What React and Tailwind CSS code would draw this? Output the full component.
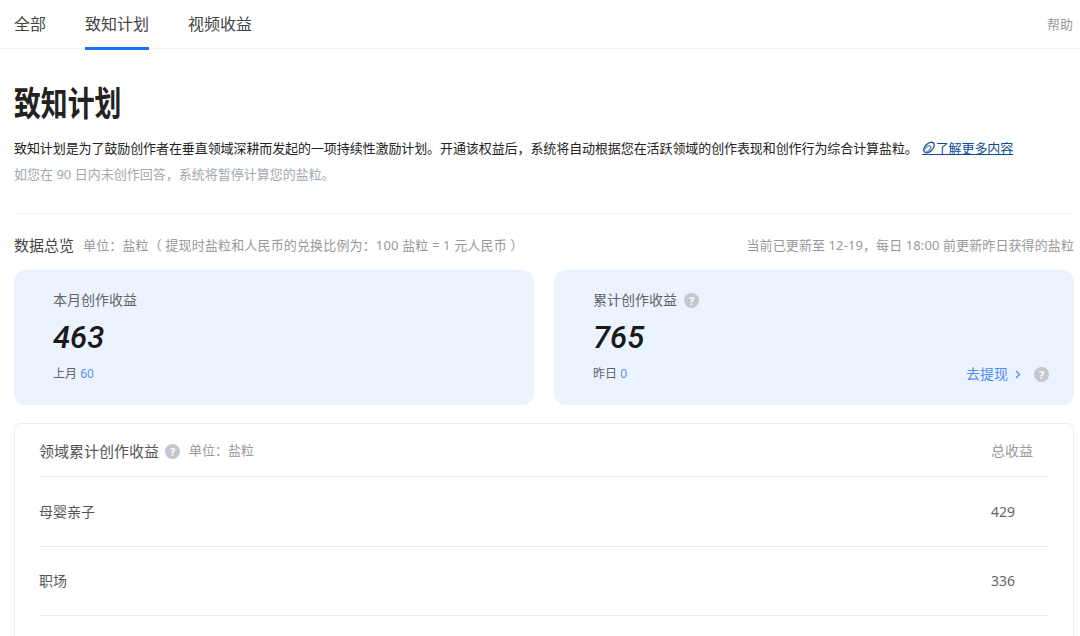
const base = "font-['Noto_Sans','Noto_Sans_CJK_SC',sans-serif]";

const HelpDot = () => (
    <span className="inline-flex h-[15px] w-[15px] items-center justify-center rounded-full bg-[#c4c7ce] text-[11px] font-bold leading-none text-white">?</span>
)

const Row = ({name, value, height = 'h-[70px]'}) => (
    <div className={`${height} flex items-center justify-between border-b border-[#ebebeb] text-sm`}>
        <span className="text-[#555555]">{name}</span>
        <span className="mr-[34px] w-[24px] text-[#666666]">{value}</span>
    </div>
)

const App = () => {
    return (
        <div className={`${base} h-[636px] w-[1080px] overflow-hidden bg-white`}>
            {/* 상단 탭 */}
            <div className="flex h-[49px] items-start justify-between border-b border-[#f0f0f2] pl-[14px] pr-[7px]">
                <div className="flex text-base text-[#444444]">
                    <div className="h-[49px] pt-[12px] leading-6">全部</div>
                    <div className="ml-[39px] h-[50px] w-[64px] border-b-[3px] border-[#1772f6] pt-[12px] leading-6">致知计划</div>
                    <div className="ml-[39px] h-[49px] pt-[12px] leading-6">视频收益</div>
                </div>
                <div className="pt-[15px] text-[13px] leading-[18px] text-[#999999]">帮助</div>
            </div>

            <div className="px-[14px] pr-[6px]">
                <h1 className="mt-[32px] origin-left scale-x-[0.79] text-[34px] font-bold leading-[44px] text-[#222222]">致知计划</h1>
                <p className="mt-[13px] flex items-center whitespace-nowrap text-[13px] leading-[20px] tracking-[-0.09px] text-[#222222]">
                    <span>致知计划是为了鼓励创作者在垂直领域深耕而发起的一项持续性激励计划。开通该权益后，系统将自动根据您在活跃领域的创作表现和创作行为综合计算盐粒。</span>
                    <a className="ml-[2px] inline-flex items-center text-[#0f4c97] underline">
                        <svg width="16" height="15" viewBox="0 0 16 15" fill="none" strokeWidth="1.3">
                            <ellipse cx="9" cy="6.5" rx="6.4" ry="3.8" stroke="#175199" transform="rotate(-45 9 6.5)" />
                            <ellipse cx="7.5" cy="8" rx="4" ry="2" stroke="#6d7fc4" transform="rotate(-45 7.5 8)" />
                            <path d="M2 13.5h14" stroke="#175199" strokeWidth="1" />
                        </svg>
                        了解更多内容
                    </a>
                </p>
                <p className="mt-[6px] text-[13px] leading-5 text-[#a3a8b0]">如您在 90 日内未创作回答，系统将暂停计算您的盐粒。</p>

                <div className="mt-[29px] border-t border-[#f0f0f2]"></div>

                <div className="mt-[21px] flex items-center justify-between">
                    <div className="flex items-center">
                        <span className="text-[15px] leading-5 text-[#444444]">数据总览</span>
                        <span className="ml-[9px] text-[13px] leading-5 tracking-[0.15px] text-[#999999]">单位：盐粒（ 提现时盐粒和人民币的兑换比例为：100 盐粒 = 1 元人民币 ）</span>
                    </div>
                    <span className="text-[13px] leading-5 tracking-[0.1px] text-[#999999]">当前已更新至 12-19，每日 18:00 前更新昨日获得的盐粒</span>
                </div>

                <div className="mt-[15px] flex gap-[20px]">
                    <div className="h-[135px] w-[520px] rounded-xl bg-[#ebf3ff] pl-[39px] pt-[20px]">
                        <div className="text-sm leading-5 text-[#646464]">本月创作收益</div>
                        <div className="mt-[8px] font-['Roboto'] text-[31px] font-medium italic leading-[40px] text-[#1a1a1a]">463</div>
                        <div className="mt-[6px] text-xs leading-5 text-[#646464]">上月 <span className="text-[#5b8ff0]">60</span></div>
                    </div>
                    <div className="h-[135px] w-[520px] rounded-xl bg-[#ebf3ff] pl-[39px] pt-[20px]">
                        <div className="flex items-center gap-[7px] text-sm leading-5 text-[#646464]">累计创作收益 <HelpDot /></div>
                        <div className="mt-[8px] font-['Roboto'] text-[31px] font-medium italic leading-[40px] text-[#1a1a1a]">765</div>
                        <div className="mt-[6px] flex items-center justify-between pr-[25px] text-xs leading-5 text-[#646464]">
                            <span>昨日 <span className="text-[#5b8ff0]">0</span></span>
                            <span className="flex items-center gap-[13px]">
                                <span className="flex items-center gap-[7px] text-sm text-[#4c8cf5]">去提现
                                    <svg width="6" height="9" viewBox="0 0 6 9" fill="none" stroke="#4c8cf5" strokeWidth="1.3"><path d="M1 1l3.5 3.5L1 8" /></svg>
                                </span>
                                <HelpDot />
                            </span>
                        </div>
                    </div>
                </div>

                <div className="mt-[18px] w-[1060px] rounded-t-md border border-[#ececec] px-[24px]">
                    <div className="flex h-[53px] items-center justify-between border-b border-[#ebebeb] pt-[2px]">
                        <div className="flex items-center">
                            <span className="text-[15px] text-[#555555]">领域累计创作收益</span>
                            <span className="ml-[6px] flex"><HelpDot /></span>
                            <span className="ml-[9px] text-[13px] text-[#999999]">单位：盐粒</span>
                        </div>
                        <span className="pr-[16px] text-sm text-[#999999]">总收益</span>
                    </div>
                    <Row name="母婴亲子" value="429" />
                    <Row name="职场" value="336" height="h-[69px]" />
                    <Row name="" value="" />
                </div>
            </div>
        </div>
    )
}

export default App;
